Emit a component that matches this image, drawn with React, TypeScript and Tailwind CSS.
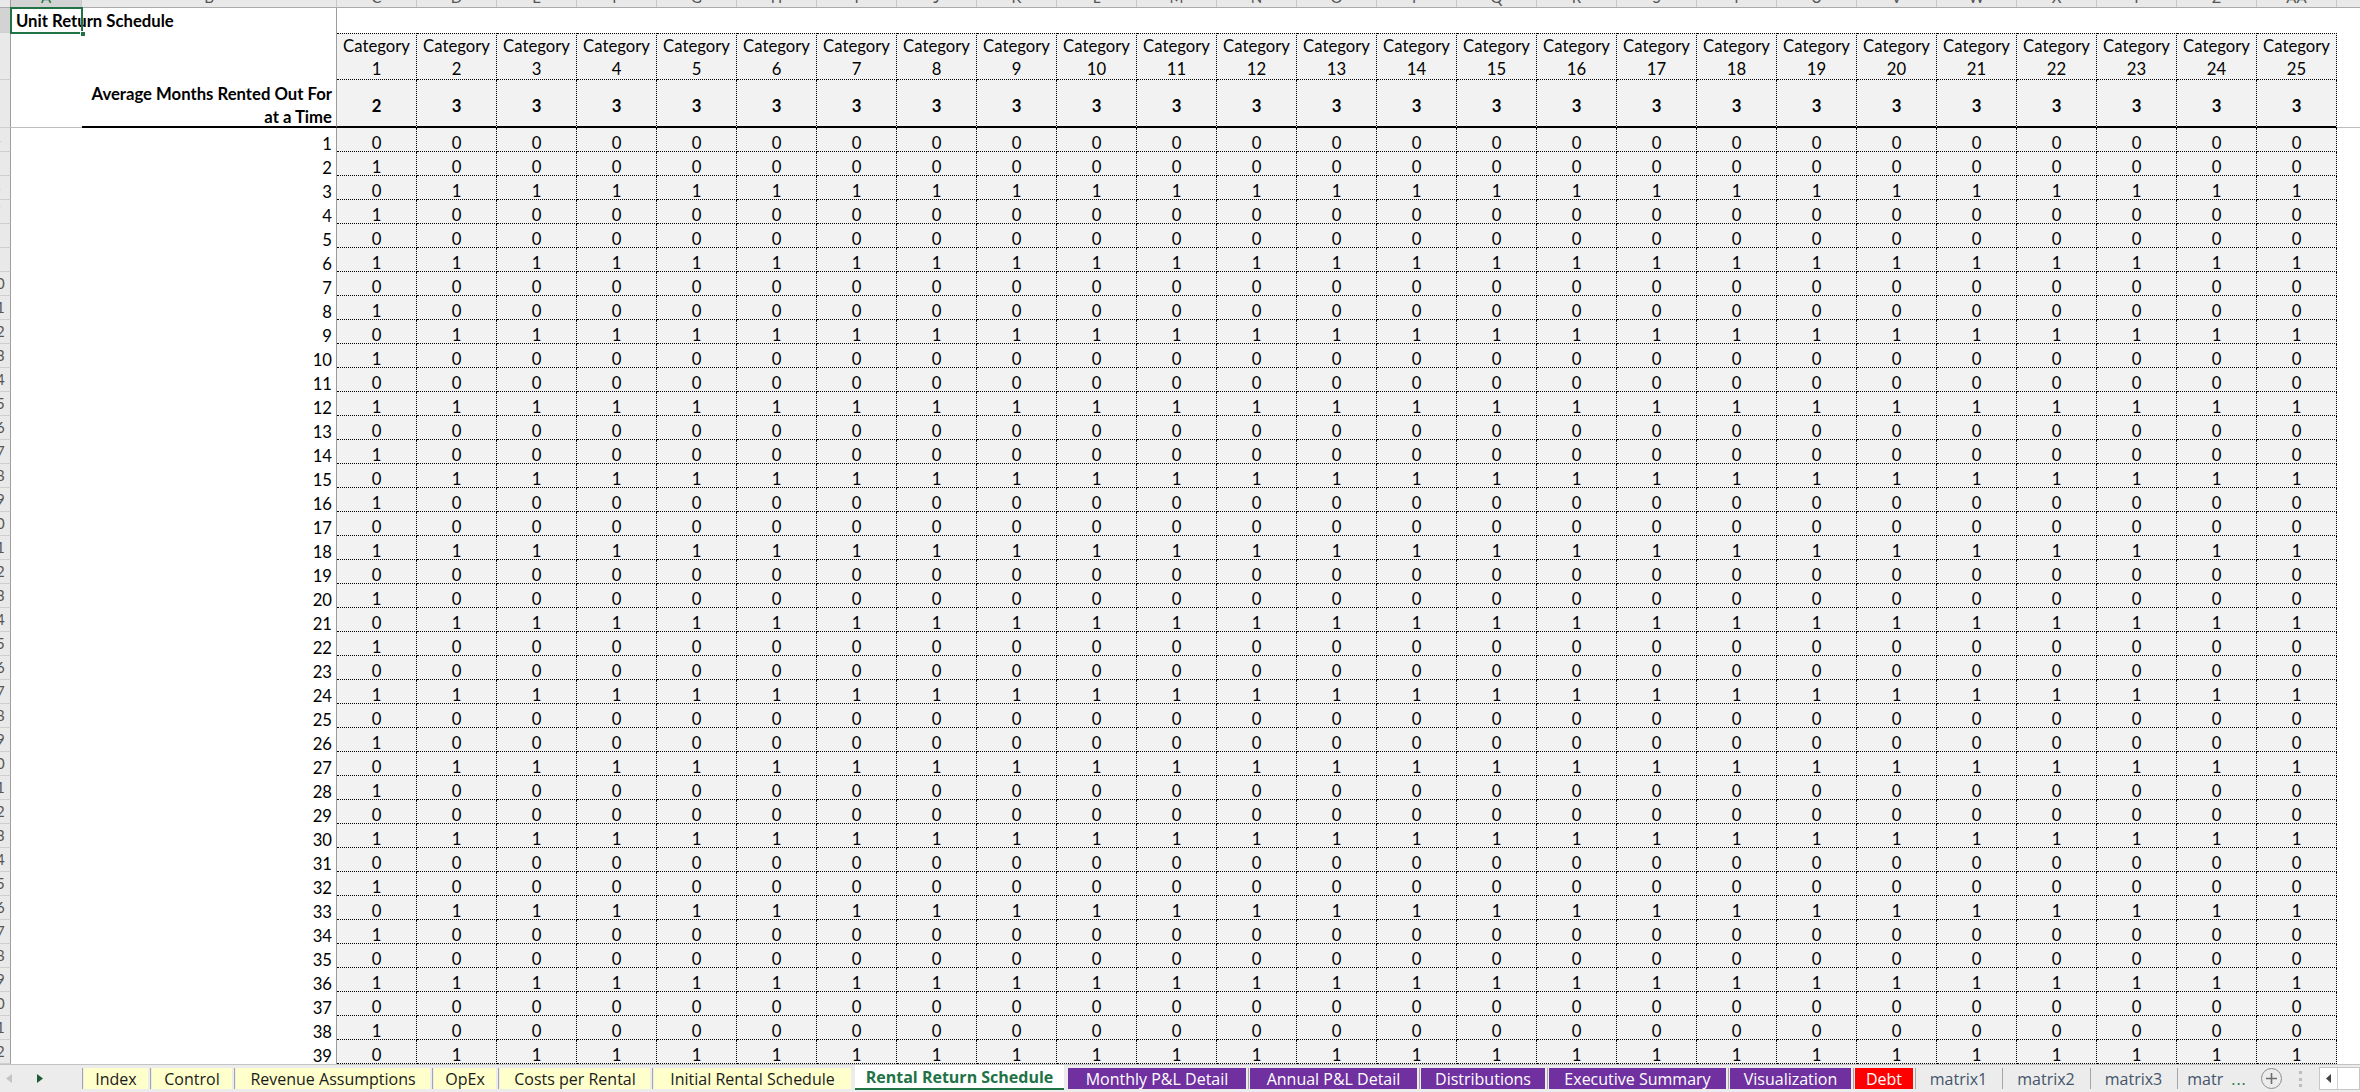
import React from 'react';

const letters = ['C','D','E','F','G','H','I','J','K','L','M','N','O','P','Q','R','S','T','U','V','W','X','Y','Z','AA'];
const rows = Array.from({ length: 39 }, (_, i) => i + 1);

function val(c: number, n: number) {
  return c === 1 ? (n % 2 === 0 ? 1 : 0) : n % 3 === 0 ? 1 : 0;
}

function RowHead({ label, h, active }: { label: string; h: string; active?: boolean }) {
  return (
    <div className={`${h} w-[11px] shrink-0 overflow-hidden border-r border-b border-r-[#9e9e9e] border-b-[#cfcfcf] ${active ? 'bg-[#d3d3d3]' : 'bg-[#e9e9e9]'} flex items-center`}>
      <div className="-ml-[19px] w-[30px] shrink-0 text-center text-[15px] text-[#555] leading-none">{label}</div>
    </div>
  );
}

function ColHead({ label, w, active }: { label: string; w: string; active?: boolean }) {
  return (
    <div className={`${w} shrink-0 h-full overflow-hidden border-r border-[#c8c8c8] ${active ? 'bg-[#d3d3d3] text-[#217346]' : 'text-[#555]'}`}>
      <div className="-mt-[13px] leading-[20px] text-[15px] text-center">{label}</div>
    </div>
  );
}

type Tab = { name: string; w: string; kind: 'y' | 'a' | 'p' | 'r' | 'm' };
const tabs: Tab[] = [
  { name: 'Index', w: 'w-[64px]', kind: 'y' },
  { name: 'Control', w: 'w-[80px]', kind: 'y' },
  { name: 'Revenue Assumptions', w: 'w-[194px]', kind: 'y' },
  { name: 'OpEx', w: 'w-[62px]', kind: 'y' },
  { name: 'Costs per Rental', w: 'w-[150px]', kind: 'y' },
  { name: 'Initial Rental Schedule', w: 'w-[197px]', kind: 'y' },
  { name: 'Rental Return Schedule', w: 'w-[209px]', kind: 'a' },
  { name: 'Monthly P&L Detail', w: 'w-[178px]', kind: 'p' },
  { name: 'Annual P&L Detail', w: 'w-[167px]', kind: 'p' },
  { name: 'Distributions', w: 'w-[124px]', kind: 'p' },
  { name: 'Executive Summary', w: 'w-[177px]', kind: 'p' },
  { name: 'Visualization', w: 'w-[121px]', kind: 'p' },
  { name: 'Debt', w: 'w-[58px]', kind: 'r' },
  { name: 'matrix1', w: 'w-[83px]', kind: 'm' },
  { name: 'matrix2', w: 'w-[84px]', kind: 'm' },
  { name: 'matrix3', w: 'w-[83px]', kind: 'm' },
];

const tabCls: Record<Tab['kind'], string> = {
  y: 'bg-[#ffffcc] text-[#1a1a1a] h-[21px] mt-[3px]',
  a: 'bg-white text-[#217346] font-bold h-[25px] border-b-2 border-[#217346]',
  p: 'bg-[#7030a0] text-white h-[21px] mt-[3px]',
  r: 'bg-[#ff0000] text-white h-[21px] mt-[3px]',
  m: 'text-[#44546a] h-[21px] mt-[3px]',
};

export default function App() {
  const cell = "font-['Lato',sans-serif]";
  return (
    <div className={`w-[2360px] h-[1092px] overflow-hidden bg-white flex flex-col ${cell} text-black`}>
      {/* column headers */}
      <div className="flex h-[8px] shrink-0 bg-[#e9e9e9] border-b border-[#ababab]">
        <div className="w-[11px] shrink-0 h-full border-r border-[#9e9e9e]" />
        <ColHead label="A" w="w-[71px]" active />
        <ColHead label="B" w="w-[255px]" />
        {letters.map((l) => (
          <ColHead key={l} label={l} w="w-[80px]" />
        ))}
        <ColHead label="AB" w="w-[80px]" />
      </div>

      {/* row 1 */}
      <div className="flex h-[25px] shrink-0">
        <RowHead label="1" h="h-[25px]" active />
        <div className="relative w-[71px] shrink-0 h-full flex items-center">
          <span className="pl-[5px] pt-[1px] whitespace-nowrap font-bold text-[16.7px] leading-none">Unit Return Schedule</span>
          <div className="absolute -left-[1px] -top-[1px] w-[73px] h-[27px] border-2 border-[#217346] z-10" />
          <div className="absolute -right-[4px] -bottom-[4px] w-[6px] h-[6px] bg-[#217346] border border-white z-20" />
        </div>
        <div className="w-[255px] shrink-0 h-full border-r border-[#9c9c9c]" />
        <div className="flex-1" />
      </div>

      {/* row 2 */}
      <div className="flex h-[47px] shrink-0">
        <RowHead label="2" h="h-[47px]" />
        <div className="w-[71px] shrink-0" />
        <div className="w-[255px] shrink-0 h-full border-r border-[#9c9c9c]" />
        {letters.map((l, i) => (
          <div key={l} className="w-[80px] shrink-0 h-full bg-[#f2f2f2] border-t border-r border-b border-dotted border-black flex flex-col items-center justify-center pt-[3px] text-[16.7px] leading-[23px]">
            <span>Category</span>
            <span>{i + 1}</span>
          </div>
        ))}
        <div className="flex-1" />
      </div>

      {/* row 3 */}
      <div className="flex h-[48px] shrink-0">
        <RowHead label="3" h="h-[48px]" />
        <div className="w-[71px] shrink-0 h-full border-b border-[#bdbdbd]" />
        <div className="w-[255px] shrink-0 h-full border-b-2 border-b-black border-r border-r-[#9c9c9c] flex items-center justify-end pr-[4px] pt-[5px]">
          <div className="text-right font-bold text-[16.7px] leading-[23px] whitespace-nowrap">
            Average Months Rented Out For
            <br />
            at a Time
          </div>
        </div>
        {letters.map((l, i) => (
          <div key={l} className="w-[80px] shrink-0 h-full bg-[#f2f2f2] border-r border-dotted border-black border-b-2 [border-bottom-style:solid] flex items-center justify-center pt-[7px] font-bold text-[16.7px] leading-none">
            {i === 0 ? 2 : 3}
          </div>
        ))}
        <div className="flex-1 border-b border-[#bdbdbd]" />
      </div>

      {/* data rows */}
      {rows.map((n) => (
        <div key={n} className="flex h-[24px] shrink-0">
          <RowHead label={String(n + 3)} h="h-[24px]" />
          <div className="w-[71px] shrink-0" />
          <div className="w-[255px] shrink-0 h-full border-r border-[#9c9c9c] flex items-center justify-end pr-[4px] pt-[8px] text-[16.7px] leading-none">
            {n}
          </div>
          {letters.map((l, i) => (
            <div key={l} className="w-[80px] shrink-0 h-full bg-[#f2f2f2] border-r border-b border-dotted border-black flex items-center justify-center pt-[8px] text-[16.7px] leading-none">
              {val(i + 1, n)}
            </div>
          ))}
          <div className="flex-1" />
        </div>
      ))}

      {/* sheet tab bar */}
      <div className="flex h-[28px] shrink-0 bg-[#ececec] border-t border-[#c2c2c2] font-['Open_Sans',sans-serif] text-[16px]">
        <div className="w-[80px] shrink-0 flex items-center">
          <svg className="ml-[6px]" width="6" height="9" viewBox="0 0 6 9"><path d="M6 0 L0 4.5 L6 9 Z" fill="#c4c4c4" /></svg>
          <svg className="ml-[25px]" width="6" height="9" viewBox="0 0 6 9"><path d="M0 0 L6 4.5 L0 9 Z" fill="#1d5b34" /></svg>
        </div>
        {tabs.map((t, i) => {
          const prevActive = i > 0 && tabs[i - 1].kind === 'a';
          const hideSep = t.kind === 'a' || prevActive;
          return (
            <React.Fragment key={t.name}>
              <div className="w-[4px] shrink-0 flex justify-center pt-[3px]">
                {!hideSep && <div className="w-px h-[21px] bg-[#a6a6a6]" />}
              </div>
              <div className={`${t.w} shrink-0 flex items-center justify-center whitespace-nowrap leading-none ${tabCls[t.kind]}`}>
                {t.name}
              </div>
            </React.Fragment>
          );
        })}
        <div className="w-[4px] shrink-0 flex justify-center pt-[3px]">
          <div className="w-px h-[21px] bg-[#a6a6a6]" />
        </div>
        <div className="w-[76px] shrink-0 h-[21px] mt-[3px] flex items-center justify-center whitespace-nowrap leading-none text-[#44546a]">
          matr <span className="ml-[8px] text-[#217346] tracking-[1px]">...</span>
        </div>
        <div className="ml-[6px] mt-[3px] w-[21px] h-[21px] shrink-0 rounded-full border border-[#8c8c8c] flex items-center justify-center">
          <svg width="13" height="13" viewBox="0 0 13 13"><path d="M6.5 1 V12 M1 6.5 H12" stroke="#6e6e6e" strokeWidth="1.6" /></svg>
        </div>
        <div className="ml-[17px] mt-[6px] w-[3px] h-[16px] shrink-0 flex flex-col justify-between">
          <div className="w-[3px] h-[3px] bg-[#bdbdbd]" />
          <div className="w-[3px] h-[3px] bg-[#bdbdbd]" />
          <div className="w-[3px] h-[3px] bg-[#bdbdbd]" />
        </div>
        <div className="ml-[17px] mt-[2px] h-[23px] flex-1 bg-white border border-[#c6c6c6] flex items-center">
          <div className="w-[18px] h-full border-r border-[#d0d0d0] flex items-center justify-center">
            <svg width="5" height="9" viewBox="0 0 5 9"><path d="M5 0 L0 4.5 L5 9 Z" fill="#444" /></svg>
          </div>
        </div>
      </div>
    </div>
  );
}
